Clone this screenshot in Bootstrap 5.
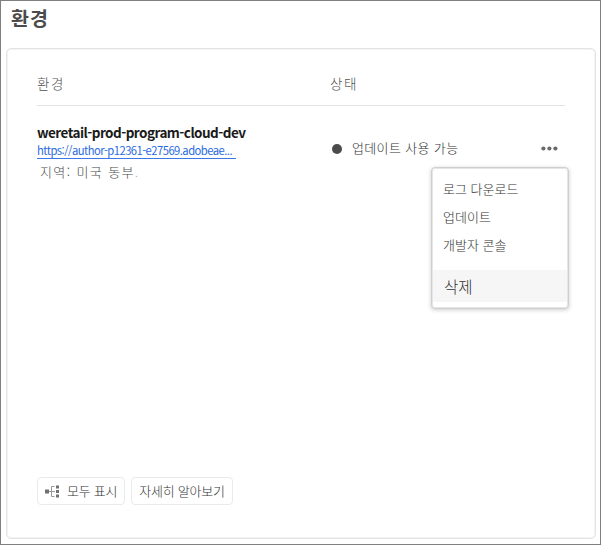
<!DOCTYPE html>
<html lang="ko">
<head>
<meta charset="utf-8">
<meta name="viewport" content="width=device-width, initial-scale=1">
<title>환경</title>
<link href="https://cdn.jsdelivr.net/npm/bootstrap@5.3.0/dist/css/bootstrap.min.css" rel="stylesheet">
<style>
body{font-family:"Noto Sans CJK KR",sans-serif;font-weight:300;color:#4b4b4b;background:#fff;font-size:13px;line-height:20px;white-space:nowrap}
.frame{height:545px;border:1px solid #7f7f7f;padding:5px 4px 5px 5px;overflow:hidden}
.page-title{font-size:19.5px;line-height:26px;font-weight:700;margin:-1px 0 17px 5px;color:#4b4b4b;letter-spacing:1.1px}
.env-card{border:1px solid #e4e4e4;box-shadow:inset 0 0 0 1px #f3f3f3;border-radius:5px;padding:1px 30px 33px 30px}
.env-head{height:56px;padding-top:23px;border-bottom:1px solid #e2e2e2;color:#505050;font-size:13.5px}
.env-head>div{letter-spacing:1.6px}
.col-env{width:293px;flex:none}
.env-name{font-size:13.5px;font-weight:700;color:#1a1a1a;line-height:20px;letter-spacing:-.53px}
.env-url{display:block;width:199px;height:17px;font-size:11.25px;font-weight:400;line-height:17px;color:#2b6be0;text-decoration:none;border-bottom:1px solid #3b78e7;letter-spacing:-.55px}
.env-region{margin:3px 0 0 3px;color:#4b4b4b;letter-spacing:1.4px}
.env-region small{color:#aaa}
.status-dot{width:10px;height:10px;background:#4b4b4b;margin:2px 10px 0 2px}
.status-text{letter-spacing:.35px;color:#333}
.more-btn{right:7px;top:40px;line-height:0;padding:0}
.env-menu{width:138px;height:142px;right:-4px;top:61px;border:1px solid #cfcfcf;border-radius:4px;box-shadow:inset 0 0 0 1px #e6e6e6,0 1px 4px rgba(0,0,0,.2);padding:7px 1px 0;background:#fff}
.env-menu .menu-row{padding:0 10px;height:28px;line-height:28px;color:#333;font-size:13px}
.env-menu .menu-delete{height:32px;line-height:32px;margin-top:11px;font-size:15.5px;padding-left:11px;background:#f6f6f6}
.foot-btn{height:28px;border:1px solid #eaeaea;border-radius:4px;padding:0 7px;font-size:13px;font-weight:300;line-height:26px;color:#333;letter-spacing:-.25px}
.foot-gap{gap:6px}
</style>
<script src="https://cdn.jsdelivr.net/npm/bootstrap@5.3.0/dist/js/bootstrap.bundle.min.js"></script>
</head>
<body>
<main class="frame d-flex flex-column">
  <h1 class="page-title">환경</h1>
  <section class="env-card flex-grow-1 d-flex flex-column">
    <div class="env-head d-flex"><div class="col-env">환경</div><div>상태</div></div>
    <div class="d-flex position-relative pt-3">
      <div class="col-env">
        <div class="env-name">weretail-prod-program-cloud-dev</div>
        <a class="env-url" href="#">https://author-p12361-e27569.adobeae...</a>
        <div class="env-region">지역: 미국 동부<small>.</small></div>
      </div>
      <div class="d-flex align-items-center align-self-start pt-3"><span class="status-dot rounded-circle"></span><span class="status-text">업데이트 사용 가능</span></div>
      <button class="more-btn btn border-0 position-absolute" aria-label="more"><svg width="17" height="5" viewBox="0 0 17 5" fill="#6a6a6a"><circle cx="2.4" cy="2.5" r="2.1"/><circle cx="8.4" cy="2.5" r="2.1"/><circle cx="14.4" cy="2.5" r="2.1"/></svg></button>
      <div class="env-menu position-absolute">
        <div class="menu-row">로그 다운로드</div>
        <div class="menu-row">업데이트</div>
        <div class="menu-row">개발자 콘솔</div>
        <div class="menu-row menu-delete">삭제</div>
      </div>
    </div>
    <div class="foot-gap d-flex mt-auto">
      <button class="foot-btn btn d-flex align-items-center"><svg class="me-2" width="14" height="13" viewBox="0 0 14 13"><path fill="#707070" d="M0 4.500h4v4H0zM11 .5h3v3h-3zM11 5h3v3h-3zM11 9.500h3v3h-3z"/><path fill="none" stroke="#999" d="M4 6.500h6M9.500 1.500H6.500v10h3"/></svg>모두 표시</button>
      <button class="foot-btn btn">자세히 알아보기</button>
    </div>
  </section>
</main>
</body>
</html>
